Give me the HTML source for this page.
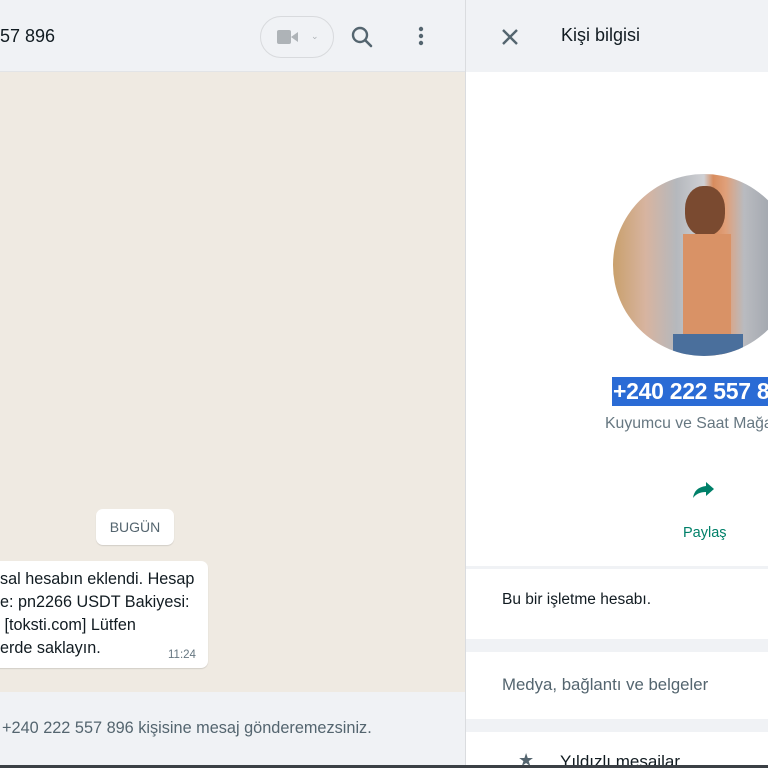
<!DOCTYPE html>
<html><head><meta charset="utf-8"><style>
*{margin:0;padding:0;box-sizing:border-box}
body{width:768px;height:768px;overflow:hidden;position:relative;font-family:"Liberation Sans",sans-serif;background:#f0f2f5}
.a{position:absolute}
</style></head><body>
<div class="a" style="left:0;top:0;width:466px;height:72px;background:#f0f2f5;border-bottom:1px solid #e2e4e7"></div>
<div class="a" style="left:0;top:26px;font-size:18px;color:#111b21">57 896</div>
<div class="a" style="left:260px;top:16px;width:74px;height:42px;border:1px solid #d8dadd;border-radius:21px"></div>
<div class="a" style="left:277px;top:30px;width:14px;height:14px;background:#aeb3b7;border-radius:2px"></div>
<div class="a" style="left:291px;top:32px;width:0;height:0;border-top:5px solid transparent;border-bottom:5px solid transparent;border-right:7px solid #aeb3b7"></div>
<div class="a" style="left:311px;top:31px;font-size:9px;color:#aeb3b7">⌄</div>
<svg class="a" style="left:350px;top:25px" width="24" height="24" viewBox="0 0 24 24"><circle cx="10" cy="10" r="7" fill="none" stroke="#54656f" stroke-width="2.4"/><line x1="15" y1="15" x2="21" y2="21" stroke="#54656f" stroke-width="2.6" stroke-linecap="round"/></svg>
<svg class="a" style="left:416px;top:26px" width="10" height="22"><circle cx="5" cy="3" r="2.2" fill="#54656f"/><circle cx="5" cy="10" r="2.2" fill="#54656f"/><circle cx="5" cy="17" r="2.2" fill="#54656f"/></svg>
<div class="a" style="left:0;top:72px;width:466px;height:620px;background:#efeae2"></div>
<div class="a" style="left:96px;top:509px;width:78px;height:36px;background:#fff;border-radius:7px;box-shadow:0 1px 1px rgba(0,0,0,.12);font-size:14px;color:#54656f;text-align:center;line-height:36px">BUGÜN</div>
<div class="a" style="left:-10px;top:561px;width:218px;height:107px;background:#fff;border-radius:7px;box-shadow:0 1px 1px rgba(0,0,0,.12)"></div>
<div class="a" style="left:0;top:568px;font-size:16.2px;color:#111b21;line-height:23px;white-space:nowrap">sal hesabın eklendi. Hesap<br>e: pn2266 USDT Bakiyesi:<br>&nbsp;[toksti.com] Lütfen<br>erde saklayın.</div>
<div class="a" style="left:168px;top:649px;font-size:11.5px;color:#667781">11:24</div>
<div class="a" style="left:0;top:692px;width:466px;height:76px;background:#f0f2f5"></div>
<div class="a" style="left:2px;top:719px;font-size:16.3px;color:#54656f;white-space:nowrap">+240 222 557 896 kişisine mesaj gönderemezsiniz.</div>
<div class="a" style="left:465px;top:0;width:1px;height:768px;background:#dadcdf"></div>
<div class="a" style="left:466px;top:0;width:302px;height:72px;background:#f0f2f5"></div>
<svg class="a" style="left:501px;top:28px" width="18" height="18"><path d="M2 2L16 16M16 2L2 16" stroke="#54656f" stroke-width="2.4"/></svg>
<div class="a" style="left:561px;top:25px;font-size:18px;color:#111b21">Kişi bilgisi</div>
<div class="a" style="left:466px;top:72px;width:302px;height:494px;background:#fff"></div>
<div class="a" style="left:613px;top:174px;width:182px;height:182px;border-radius:50%;overflow:hidden;background:linear-gradient(90deg,#c9a06c 0%,#d7b4a0 18%,#b5b8bd 35%,#cfd0d4 50%,#d88c5e 55%,#e0a07a 62%,#b9bbc0 72%,#8f96a0 100%)">
<div style="position:absolute;left:72px;top:12px;width:40px;height:50px;border-radius:45%;background:#7a4a30"></div>
<div style="position:absolute;left:70px;top:60px;width:48px;height:110px;background:#d99266"></div>
<div style="position:absolute;left:60px;top:160px;width:70px;height:22px;background:#4a6f9c"></div>
</div>
<div class="a" style="left:612px;top:377px;width:160px;height:29px;background:#2a6bd5"></div>
<div class="a" style="left:613px;top:378px;font-size:23px;color:#fff;white-space:nowrap;font-weight:bold;letter-spacing:-0.3px">+240 222 557 896</div>
<div class="a" style="left:605px;top:415px;font-size:15.8px;color:#667781;white-space:nowrap">Kuyumcu ve Saat Mağazası</div>
<svg class="a" style="left:692px;top:480px" width="24" height="20" viewBox="0 0 24 20"><path d="M14 2L22 9L14 16V12C8 12 4 14 1 18C2 11 6 7 14 6Z" fill="#008069"/></svg>
<div class="a" style="left:683px;top:525px;font-size:14.5px;color:#008069">Paylaş</div>
<div class="a" style="left:466px;top:566px;width:302px;height:202px;background:#f0f2f5"></div>
<div class="a" style="left:466px;top:569px;width:302px;height:70px;background:#fff"></div>
<div class="a" style="left:502px;top:591px;font-size:15.5px;color:#111b21">Bu bir işletme hesabı.</div>
<div class="a" style="left:466px;top:652px;width:302px;height:67px;background:#fff"></div>
<div class="a" style="left:502px;top:675px;font-size:16.8px;color:#54656f;white-space:nowrap">Medya, bağlantı ve belgeler</div>
<div class="a" style="left:466px;top:732px;width:302px;height:36px;background:#fff;overflow:hidden">
<div class="a" style="left:52px;top:18px;font-size:18px;color:#54656f">★</div>
<div class="a" style="left:94px;top:20px;font-size:17px;color:#111b21;white-space:nowrap">Yıldızlı mesajlar</div>
</div>
<div class="a" style="left:0;top:765px;width:768px;height:3px;background:#3b4045"></div>
</body></html>
